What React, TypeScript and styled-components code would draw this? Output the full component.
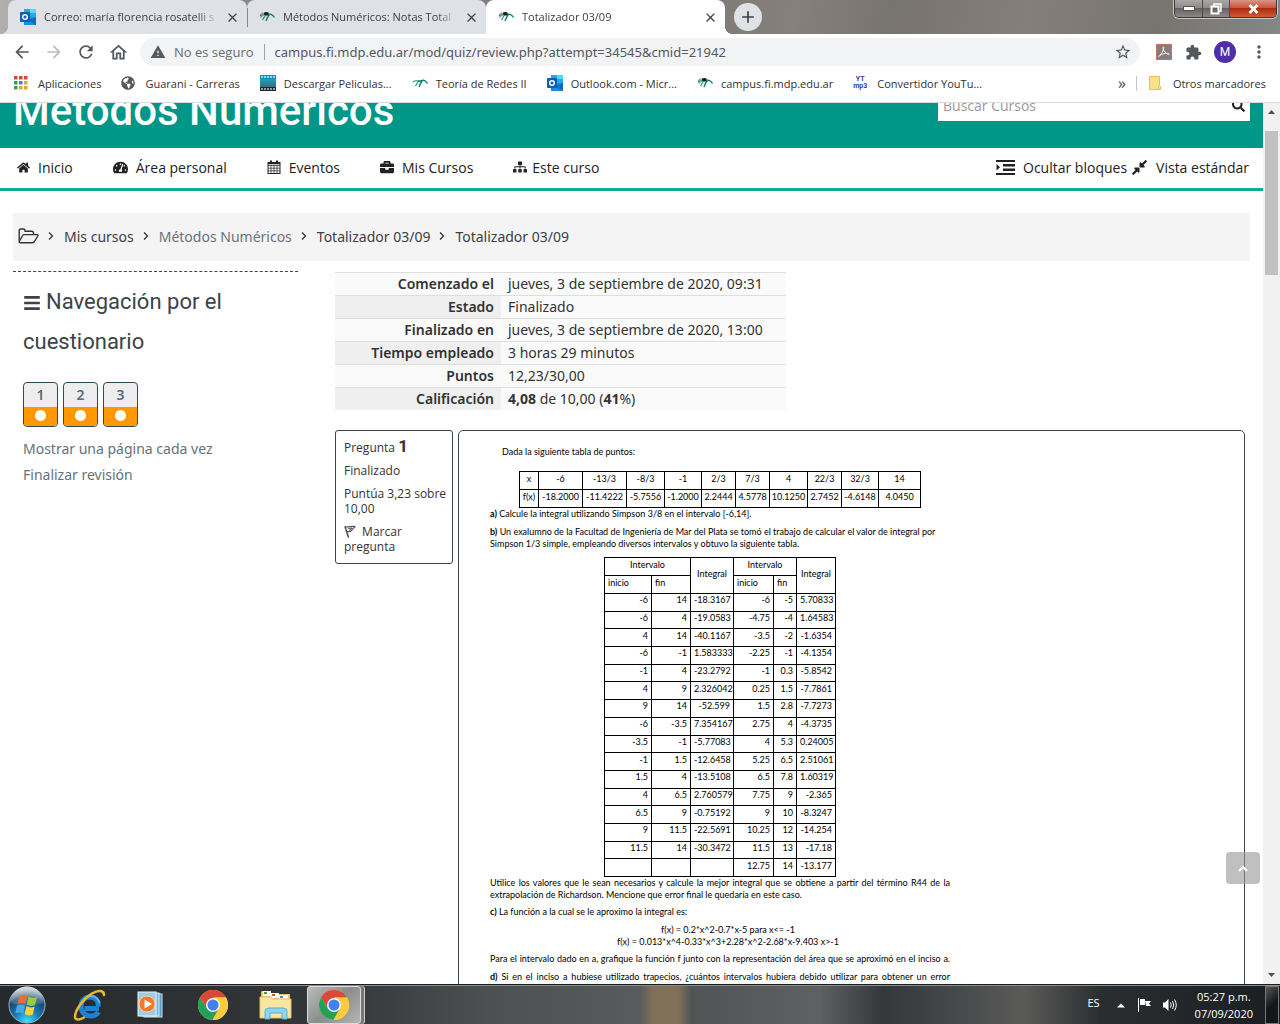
import React from "react";
import styled, { createGlobalStyle, css } from "styled-components";
import {
  MdArrowBack,
  MdArrowForward,
  MdRefresh,
  MdOutlineHome,
  MdWarning,
  MdStarBorder,
  MdExtension,
  MdMoreVert,
  MdClose,
  MdAdd,
} from "react-icons/md";
import {
  FaHome,
  FaTachometerAlt,
  FaBriefcase,
  FaSitemap,
  FaCompressAlt,
  FaSearch,
  FaBars,
  FaGlobeAmericas,
} from "react-icons/fa";

const UI = `"Open Sans", "Noto Sans", sans-serif`;
const BODY = `"Noto Sans", "Open Sans", sans-serif`;
const HEAD = `Roboto, "Open Sans", sans-serif`;
const DOC = `Lato, "Open Sans", sans-serif`;

const Global = createGlobalStyle`
  *, *::before, *::after { box-sizing: border-box; }
  html, body { margin: 0; padding: 0; }
  body { font-family: ${UI}; font-size: 14px; color: #333; background: #fff; overflow: hidden; }
  button { font: inherit; color: inherit; padding: 0; border: 0; background: none; }
  a { color: inherit; text-decoration: none; }
  svg { display: block; flex: none; }
  table { border-spacing: 0; border-collapse: collapse; }
`;

/* ---------- drawings ---------- */

const CampusIcon = ({ size = 16, body = true }: { size?: number; body?: boolean }) => (
  <svg width={size} height={size} viewBox="0 0 16 16" fill="none">
    {body && <path d="M1 6L4 3.500M1.500 8.500L4.500 5.500" stroke="#8d9a9a" strokeWidth="1.200" />}
    <path d="M1 7C3 5.500 4.500 5.500 6.500 6L3.500 11" stroke="#2a8f83" strokeWidth="1.200" />
    <path d="M6 6H10C8.500 8 8 9.500 7 12" stroke="#13806f" strokeWidth="1.400" />
    <path d="M9 6C11.500 4.500 14 5.500 15.500 8.500" stroke="#13806f" strokeWidth="1.400" />
    {body && <path d="M4.500 4C6 2.500 8.500 2.500 10 4L9 6H5.500Z" fill="#1b1d1d" />}
  </svg>
);

const OutlookIcon = () => (
  <svg width="16" height="16" viewBox="0 0 16 16">
    <rect x="4" y="0" width="12" height="8" fill="#28a8ea" />
    <rect x="10" y="0" width="6" height="4" fill="#50d9ff" />
    <rect x="4" y="4" width="6" height="5" fill="#0364b8" />
    <path d="M4 8h12v8H4z" fill="#1490df" />
    <path d="M16 8v8L8 11z" fill="#0f6cbd" />
    <rect x="0" y="3" width="10" height="10" rx="1" fill="#0a5fb4" />
    <circle cx="5" cy="8" r="2.300" fill="none" stroke="#fff" strokeWidth="1.500" />
  </svg>
);

const AppsIcon = () => (
  <svg width="14" height="14" viewBox="0 0 14 14">
    {["#d9453a", "#d9453a", "#d9453a", "#3f9c57", "#3f7de0", "#e3a52c", "#3f9c57", "#e3a52c", "#e3a52c"].map(
      (c, i) => (
        <rect key={i} x={(i % 3) * 5} y={Math.floor(i / 3) * 5} width="3.500" height="3.500" fill={c} />
      )
    )}
  </svg>
);

const FilmIcon = () => (
  <svg width="16" height="16" viewBox="0 0 16 16">
    <defs>
      <linearGradient id="film" x1="0" y1="0" x2="0" y2="1">
        <stop offset="0" stopColor="#1c9fbd" />
        <stop offset="1" stopColor="#3c6f80" />
      </linearGradient>
    </defs>
    <rect width="16" height="16" fill="#1f2a30" />
    <rect width="16" height="4" fill="#0d8fb8" />
    <rect y="4" width="16" height="8" fill="url(#film)" />
    {[1, 4, 7, 10, 13].map((x) => (
      <g key={x}>
        <rect x={x} y="1" width="2" height="2" fill="#7fe4f7" />
        <rect x={x} y="13" width="2" height="2" fill="#93a5ab" />
      </g>
    ))}
  </svg>
);

const FolderMark = () => (
  <svg width="12" height="14" viewBox="0 0 12 14">
    <path d="M0.500 0.500h10v9l1 1v3h-11z" fill="#fde08a" stroke="#e6c04f" />
    <path d="M9.500 13.500v-3.500" stroke="#e6c04f" />
  </svg>
);

const PdfIcon = () => (
  <svg width="16" height="16" viewBox="0 0 16 16" fill="none">
    <rect x="0.500" y="0.500" width="15" height="15" fill="#857c7c" stroke="#c4726c" />
    <path
      d="M3 12.500C5 11 7.500 6.500 7.800 3.500C7.800 2.500 6.800 2.500 6.900 3.800C7.200 6.500 10 10 12.800 10.600C14 10.600 13 9.300 11.500 9.300C9 9.300 6 10 3.500 11.500C2.500 12.200 2.500 13 3 12.500Z"
      stroke="#f3eded"
      strokeWidth="1"
    />
  </svg>
);

const CalendarIcon = () => (
  <svg width="14" height="14" viewBox="0 0 14 14" fill="none" stroke="#222">
    <rect x="1" y="2.500" width="12" height="11" />
    <path d="M1 3.500h12" strokeWidth="1.500" />
    <path d="M4 5v8.500M7 5v8.500M10 5v8.500M1 5.500h12M1 8.200h12M1 10.800h12" strokeWidth="0.700" />
    <path d="M4 0.500v3M10 0.500v3" strokeWidth="2" />
  </svg>
);

const IndentIcon = () => (
  <svg width="19" height="15" viewBox="0 0 19 15" fill="#222">
    <path d="M0 0h19v2H0zM7 4h12v2.500H7zM7 8.500h12v2.500H7zM0 13h19v2H0zM0.500 4L4 7.300L0.500 10.600z" />
  </svg>
);

const FolderOpenIcon = () => (
  <svg width="21" height="16" viewBox="0 0 21 16" fill="none" stroke="#333" strokeWidth="1.400" strokeLinejoin="round">
    <path d="M1.200 13V2.500Q1.200 1 2.700 1H5.500Q7 1 7 2.500V3.200H13.500Q15.500 3.200 15.500 5V6.500" />
    <path d="M5.800 6.600H19.200Q20.600 6.600 19.800 8L16.500 13.500Q15.600 14.800 14 14.800H2.500Q0.500 14.800 1.500 13L4.300 8Q5 6.600 5.800 6.600Z" />
  </svg>
);

const FlagIcon = () => (
  <svg width="12" height="13" viewBox="0 0 12 13" fill="none" stroke="#555" strokeWidth="1.200">
    <path d="M1 1.500L4.500 12.500" strokeWidth="1.600" />
    <path d="M1 1.500C4 3 7 0.500 11 1.500L6.500 6.500C5 6 4 6.500 3 7.500" />
    <path d="M4 3.500L8 3L5 5.500" strokeWidth="1" />
  </svg>
);

const ChromeLogo = () => (
  <svg width="30" height="30" viewBox="0 0 30 30">
    <circle cx="15" cy="15" r="15" fill="#fbc934" />
    <path d="M2 7.500A15 15 0 0 1 28 7.500H15L9 18.500Z" fill="#d9483b" />
    <path d="M2 7.500A15 15 0 0 0 14.500 30L21 18.500L9 18.500Z" fill="#23a05a" />
    <path d="M28 7.500A15 15 0 0 1 14.500 30L21 18.500L20 10L15 7.500Z" fill="#fccc3e" />
    <circle cx="15" cy="15" r="7" fill="#f4f4f4" />
    <circle cx="15" cy="15" r="5.500" fill="#4280ef" />
  </svg>
);

const StartOrb = () => (
  <svg width="40" height="38" viewBox="0 0 40 38">
    <defs>
      <radialGradient id="orb" cx="0.5" cy="0.95" r="0.9">
        <stop offset="0" stopColor="#3fe0ff" />
        <stop offset="0.4" stopColor="#1578b4" />
        <stop offset="0.75" stopColor="#17486e" />
        <stop offset="1" stopColor="#8fa9b8" />
      </radialGradient>
      <linearGradient id="gloss" x1="0" y1="0" x2="0" y2="1">
        <stop offset="0" stopColor="#fff" stopOpacity="0.600" />
        <stop offset="1" stopColor="#fff" stopOpacity="0.100" />
      </linearGradient>
    </defs>
    <circle cx="20" cy="19" r="18" fill="url(#orb)" stroke="#9fb6c2" strokeWidth="1" />
    <path d="M3.500 17A16.500 16.500 0 0 1 36.500 17Q20 22 3.500 17Z" fill="url(#gloss)" />
    <path d="M12.500 10Q16 8 20 10L18.300 18Q14.500 16 10.500 18Z" fill="#ef6b2f" />
    <path d="M21.500 10.500Q25.500 13 30 11L28 19Q24 21 19.800 18.500Z" fill="#9ccb3d" />
    <path d="M10 19.500Q14 17.500 18 19.500L16.200 27.500Q12.500 25.500 8 27.500Z" fill="#4aa5e8" />
    <path d="M19.500 20Q23.500 22.500 27.600 20.500L25.800 28.500Q21.500 30.500 17.700 28Z" fill="#fcd13a" />
  </svg>
);

const ExplorerE = () => (
  <svg width="34" height="32" viewBox="0 0 34 32" fill="none">
    <path
      d="M27 19.500H12.500M26.500 17.500C26.500 11.500 23 8 18 8C12.500 8 9 12 9 17.500C9 23 13 27 18.500 27C22.500 27 25 25.500 26.500 23"
      stroke="#1c82d2"
      strokeWidth="5"
    />
    <path d="M10 14C12 9 16 7 19 7C23 7 26.500 10 27.500 14" stroke="#5cb9f0" strokeWidth="2" />
    <path
      d="M32 6C32 1 26 1 20 4.500C11 10 3 21 3 28C3 32 9 30.500 12 28.500"
      stroke="#f0b52c"
      strokeWidth="2.500"
      strokeLinecap="round"
    />
  </svg>
);

const MediaIcon = () => (
  <svg width="27" height="27" viewBox="0 0 27 27">
    <rect x="7" y="3" width="18" height="23" fill="#5f9cc2" stroke="#bfe0f2" />
    <rect x="4" y="2" width="18" height="23" fill="#7db6d8" stroke="#d3ecf8" />
    <rect x="1" y="1" width="18" height="24" fill="#9fcbe4" stroke="#e3f3fb" />
    <circle cx="10" cy="13" r="8" fill="#f0792a" stroke="#fbd2ad" />
    <path d="M7.500 8.500L15 13L7.500 17.500Z" fill="#fff" />
  </svg>
);

const FolderIcon = () => (
  <svg width="33" height="31" viewBox="0 0 33 31">
    <path d="M2 5V3Q2 2 3 2H9L11 5H31V28H2Z" fill="#e7c667" />
    <rect x="4" y="2" width="8" height="5" fill="#fff" />
    <rect x="5" y="3" width="3" height="2" fill="#38a345" />
    <rect x="12" y="4" width="8" height="5" fill="#fff" />
    <rect x="13" y="5" width="3" height="2" fill="#d9483b" />
    <rect x="20" y="6" width="9" height="4" fill="#fff" />
    <rect x="21" y="7" width="3" height="2" fill="#3b8fd8" />
    <path d="M1 8H12L14 10H32V29H1Z" fill="#f8e6a3" stroke="#e0c36a" />
    <path d="M6 30V22Q6 19 10 19H24Q28 19 28 22V30H23V24H11V30Z" fill="#8fd3ef" stroke="#58aed2" />
  </svg>
);

const TrayFlag = () => (
  <svg width="15" height="15" viewBox="0 0 15 15" fill="#fff">
    <path d="M1 1h1v14H1zM3 2h5v6H3zM8 4h6l-2 2.500L14 9H9z" />
  </svg>
);

const TraySpeaker = () => (
  <svg width="16" height="14" viewBox="0 0 16 14" fill="#fff">
    <path d="M1 4.500H3L6.500 1V13L3 9.500H1Z" />
    <path d="M8.500 4.500Q10 7 8.500 9.500M10.500 3Q13 7 10.500 11M12.500 1.500Q16 7 12.500 12.500" fill="none" stroke="#fff" />
  </svg>
);

/* ---------- window ---------- */

const Screen = styled.div`
  height: 100vh;
  display: flex;
  flex-direction: column;
`;

const TabStrip = styled.div`
  height: 34px;
  flex: none;
  display: flex;
  align-items: flex-start;
  padding: 0 3px 0 8px;
  background: linear-gradient(100deg, #b2b0ae 0, #8f8d8a 12%, #7a7773 50%, #858079 62%, #77736e 70%, #857f79 80%, #77746f 90%, #858785 100%);
`;

const flare = css`
  content: "";
  position: absolute;
  bottom: 0;
  width: 8px;
  height: 8px;
`;

const Tab = styled.div<{ $active?: boolean }>`
  position: relative;
  flex: 0 1 239px;
  min-width: 0;
  height: 34px;
  display: flex;
  align-items: center;
  gap: 8px;
  padding: 0 9px 0 12px;
  border-radius: 8px 8px 0 0;
  background: ${(p) => (p.$active ? "#fff" : "#dee1e6")};
  &:first-child::before {
    ${flare}
    left: -8px;
    background: radial-gradient(circle at 0 0, transparent 8px, #dee1e6 8px);
  }
  &:nth-child(3)::after {
    ${flare}
    right: -8px;
    background: radial-gradient(circle at 100% 0, transparent 8px, #fff 8px);
  }
  & + &:nth-child(2)::before {
    content: "";
    position: absolute;
    left: 0;
    top: 8px;
    width: 1px;
    height: 19px;
    background: #85888c;
  }
`;

const TabTitle = styled.span`
  flex: 1;
  min-width: 0;
  overflow: hidden;
  white-space: nowrap;
  font-size: 11px;
  color: #3c4043;
  padding-bottom: 2px;
  mask-image: linear-gradient(90deg, #000 88%, transparent);
`;

const IconButton = styled.button<{ $size?: number; $tone?: string }>`
  width: ${(p) => p.$size ?? 16}px;
  height: ${(p) => p.$size ?? 16}px;
  flex: none;
  display: flex;
  align-items: center;
  justify-content: center;
  color: ${(p) => p.$tone ?? "#54575b"};
`;

const NewTab = styled(IconButton)`
  margin: 3px 0 0 9px;
  border-radius: 50%;
  background: #dee1e6;
`;

const WindowButtons = styled.div`
  margin-left: auto;
  display: flex;
  border: 1px solid #3a3a3a;
  border-top: 0;
  border-radius: 0 0 5px 5px;
  overflow: hidden;
  box-shadow: 0 0 0 1px #c9c6c3;
`;

const WindowButton = styled.button<{ $close?: boolean }>`
  width: ${(p) => (p.$close ? 47 : 27)}px;
  height: 17px;
  display: flex;
  align-items: center;
  justify-content: center;
  background: ${(p) =>
    p.$close
      ? "linear-gradient(#d99686, #c9553c 45%, #b02a10 50%, #cf5a34)"
      : "linear-gradient(#aaa8a6, #8f8e8c 45%, #646362 50%, #8a8988)"};
  & + & { border-left: 1px solid #4a4a4a; }
`;

const Toolbar = styled.div`
  flex: none;
  display: flex;
  align-items: center;
  padding: 4px 11px 0 12px;
  background: #fff;
`;

const NavButtons = styled.div`
  display: flex;
  gap: 12px;
  margin-right: 12px;
`;

const Omnibox = styled.div`
  flex: 1;
  min-width: 0;
  height: 28px;
  display: flex;
  align-items: center;
  padding: 0 8px 0 10px;
  border-radius: 14px;
  background: #f1f3f4;
  color: #6a6d71;
  font-size: 13px;
`;

const Security = styled.span`
  padding: 0 10px 0 8px;
  border-right: 1px solid #a0a3a6;
  line-height: 16px;
`;

const Address = styled.input`
  flex: 1;
  min-width: 0;
  margin-left: 10px;
  padding: 0;
  border: 0;
  background: none;
  outline: none;
  font: 13px ${BODY};
  color: #55585c;
`;

const Extensions = styled.div`
  display: flex;
  align-items: center;
  gap: 13px;
  margin-left: 16px;
`;

const Avatar = styled.button`
  width: 22px;
  height: 22px;
  border-radius: 50%;
  background: #512da8;
  color: #fff;
  font: 12px ${HEAD};
`;

const Bookmarks = styled.div`
  height: 37px;
  flex: none;
  display: flex;
  align-items: center;
  gap: 20px;
  padding: 0 14px 2px;
  background: #fff;
  border-bottom: 1px solid #d9dcdf;
  font-size: 11px;
  color: #303336;
`;

const Bookmark = styled.a`
  display: flex;
  align-items: center;
  gap: 8px;
  white-space: nowrap;
`;

const MarkIcon = styled.span`
  width: 16px;
  display: flex;
  justify-content: flex-start;
`;

const Mp3Mark = styled.span`
  color: #2d3f9b;
  font: bold 7px/7px ${HEAD};
  text-align: center;
`;

const BookmarksEnd = styled.div`
  margin-left: auto;
  display: flex;
  align-items: center;
  gap: 10px;
`;

const More = styled.button`
  font-size: 16px;
  color: #45484c;
`;

const Others = styled(Bookmark)`
  padding-left: 12px;
  border-left: 1px solid #c6c9cc;
`;

/* ---------- page ---------- */

const Viewport = styled.div`
  position: relative;
  flex: 1;
  min-height: 0;
  display: flex;
  overflow: hidden;
`;

const Page = styled.div`
  flex: 1;
  min-width: 0;
  overflow: hidden;
`;

const Header = styled.header`
  height: 45px;
  display: flex;
  align-items: flex-end;
  justify-content: space-between;
  padding: 0 13px;
  background: #009688;
  overflow: hidden;
`;

const SiteTitle = styled.h1`
  margin: 0 0 13px;
  font: 500 42px/48px ${HEAD};
  color: #fff;
`;

const Search = styled.form`
  width: 312px;
  height: 30px;
  display: flex;
  align-items: center;
  margin-bottom: 27px;
  padding: 0 5px 2px;
  background: #fff;
  color: #222;
`;

const SearchInput = styled.input`
  flex: 1;
  min-width: 0;
  padding: 0;
  border: 0;
  outline: none;
  font: 14px ${UI};
  &::placeholder { color: #999; }
`;

const MenuBar = styled.nav`
  height: 43px;
  display: flex;
  align-items: center;
  gap: 40px;
  padding: 0 14px 2px 17px;
  border-bottom: 3px solid #13a89a;
  color: #222;
`;

const MenuLink = styled.a<{ $gap?: number }>`
  display: flex;
  align-items: center;
  gap: ${(p) => p.$gap ?? 8}px;
  white-space: nowrap;
`;

const MenuRight = styled.div`
  margin-left: auto;
  display: flex;
  gap: 4px;
`;

const Crumbs = styled.nav`
  height: 48px;
  display: flex;
  align-items: center;
  gap: 9px;
  margin: 22px 13px 0;
  padding: 0 5px 2px;
  background: #f4f4f4;
  font-family: ${BODY};
`;

const Crumb = styled.a<{ $soft?: boolean }>`
  color: ${(p) => (p.$soft ? "#69727a" : "#3c4043")};
`;

const Chevron = () => (
  <svg width="7" height="10" viewBox="0 0 7 10" fill="none" stroke="#333" strokeWidth="1.300">
    <path d="M1 1.500L4.500 5L1 8.500" />
  </svg>
);

const Columns = styled.div`
  display: grid;
  grid-template-columns: 285px 1fr;
  gap: 37px;
  padding: 10px 18px 0 13px;
  font-family: ${BODY};
`;

const Sidebar = styled.aside`
  border-top: 1px dashed #444;
  padding: 10px;
`;

const SideTitle = styled.h2`
  margin: 0;
  font: 400 22px/40px ${HEAD};
  color: #3d434a;
  svg { display: inline; vertical-align: -3px; margin-right: 5px; }
`;

const QuizButtons = styled.div`
  display: flex;
  gap: 5px;
  margin: 20px 0 9px;
`;

const QuizButton = styled.a`
  width: 35px;
  height: 45px;
  display: flex;
  flex-direction: column;
  border: 1px solid #2d4d5c;
  border-radius: 4px;
  overflow: hidden;
  background: #ededed;
  color: #5c6a72;
  font-weight: 600;
  line-height: 24px;
  text-align: center;
  &::after {
    content: "";
    flex: 1;
    background: radial-gradient(circle at 50% 45%, #fff 5px, #ff9800 6px);
  }
`;

const SideLink = styled.a`
  display: block;
  line-height: 26px;
  color: #66717a;
`;

const Summary = styled.table`
  width: 451px;
  margin-top: 1px;
  line-height: 22px;
  th, td {
    padding: 0 7px;
    border-top: 1px solid #ddd;
    background: #fafafa;
    text-align: left;
  }
  th { width: 166px; text-align: right; font-weight: 600; }
  tr:nth-child(even) th { background: #efefef; }
`;

const Question = styled.section`
  display: flex;
  align-items: flex-start;
  gap: 5px;
  margin-top: 20px;
`;

const Info = styled.div`
  width: 118px;
  height: 134px;
  flex: none;
  display: flex;
  flex-direction: column;
  gap: 8px;
  padding: 8px 4px 8px 8px;
  border: 1px solid #3f464b;
  border-radius: 3px;
  font: 12px/15px ${UI};
  p, h3 { margin: 0; }
  h3 { font-size: 12px; font-weight: 400; }
  h3 b { font: 700 17px/15px ${HEAD}; }
  svg { display: inline; vertical-align: -2px; margin: 0 3px 0 0; }
`;

const Content = styled.div`
  flex: 1;
  min-width: 0;
  min-height: 640px;
  padding: 15px 31px;
  border: 1px solid #3f464b;
  border-radius: 5px;
`;

const Sheet = styled.article`
  max-width: 460px;
  color: #000;
  font: 9px/12px ${DOC};
`;

const Para = styled.p<{ $gap?: number; $align?: string; $last?: string; $indent?: number }>`
  margin: 0 0 ${(p) => p.$gap ?? 6}px;
  padding-left: ${(p) => p.$indent ?? 0}px;
  text-align: ${(p) => p.$align ?? "left"};
  text-align-last: ${(p) => p.$last ?? "auto"};
`;

const Points = styled.table`
  table-layout: fixed;
  width: 402px;
  margin-left: 29px;
  line-height: 11px;
  td, th {
    height: 18px;
    padding: 0 0 5px;
    border: 1px solid #000;
    font-weight: 400;
    text-align: center;
  }
`;

const Integrals = styled.table`
  table-layout: fixed;
  width: 232px;
  height: 320px;
  margin: 0 0 0 114px;
  line-height: 11px;
  td, th {
    padding: 0 3px 5px;
    border: 1px solid #000;
    font-weight: 400;
    text-align: right;
  }
  th { height: 18px; text-align: left; }
  th[colspan], th[rowspan] { padding: 0 0 5px; text-align: center; }
`;

const Col = styled.col<{ $w: number }>`
  width: ${(p) => p.$w}px;
`;

const ToTop = styled.button`
  position: absolute;
  right: 20px;
  bottom: 100px;
  width: 34px;
  height: 32px;
  display: flex;
  align-items: center;
  justify-content: center;
  border-radius: 4px;
  background: rgba(150, 150, 150, 0.6);
`;

const Scrollbar = styled.div`
  width: 17px;
  flex: none;
  display: flex;
  flex-direction: column;
  align-items: center;
  background: #f1f1f1;
`;

const Thumb = styled.div`
  width: 13px;
  flex: 0 0 144px;
  margin: 11px 0 auto;
  background: #c1c1c1;
`;

const Arrow = ({ up }: { up?: boolean }) => (
  <svg width="17" height="17" viewBox="0 0 17 17" fill="#505050">
    <path d={up ? "M5 11L8.500 7L12 11Z" : "M5 6L8.500 10L12 6Z"} />
  </svg>
);

/* ---------- taskbar ---------- */

const Taskbar = styled.footer`
  height: 40px;
  flex: none;
  display: flex;
  align-items: center;
  padding: 0 1px 0 7px;
  border-top: 1px solid #1a1c1d;
  box-shadow: inset 0 1px 0 #8a8d8e;
  color: #fff;
  font-size: 11px;
  background: linear-gradient(
    90deg, #26292b 0, #34383a 27%, #4c5051 38%, #585b5b 50%, #80705a 51%, #80705a 53%, #505455 54%, #5d6162 64%,
    #34383b 69%, #474a4b 75%, #5b5a59 80%, #2b2e30 86%, #1b1e20 100%
  );
`;

const TaskButton = styled.button<{ $active?: boolean; $w: number }>`
  width: ${(p) => p.$w}px;
  height: 38px;
  display: flex;
  align-items: center;
  justify-content: center;
  ${(p) =>
    p.$active &&
    css`
      margin-left: 14px;
      border: 1px solid #dcdcdc;
      border-radius: 3px;
      background: linear-gradient(135deg, #bcbcbc, #8b8c8c 50%, #b4b4b4);
      box-shadow: 3px 0 0 #777, 4px 0 0 #ccc;
    `}
`;

const Tray = styled.div`
  margin-left: auto;
  display: flex;
  align-items: center;
  gap: 10px;
`;

const Language = styled.span`
  padding-bottom: 4px;
`;

const Clock = styled.time`
  margin: 0 2px 0 7px;
  text-align: center;
  line-height: 17px;
`;

const ShowDesktop = styled.button`
  width: 14px;
  height: 38px;
  border: 1px solid #777;
  background: linear-gradient(135deg, #55585a, #141617 50%);
`;

/* ---------- data ---------- */

const xs = ["-6", "-13/3", "-8/3", "-1", "2/3", "7/3", "4", "22/3", "32/3", "14"];
const fx = ["-18.2000", "-11.4222", "-5.7556", "-1.2000", "2.2444", "4.5778", "10.1250", "2.7452", "-4.6148", "4.0450"];

const integrals = [
  ["-6", "14", "-18.3167", "-6", "-5", "5.70833"],
  ["-6", "4", "-19.0583", "-4.75", "-4", "1.64583"],
  ["4", "14", "-40.1167", "-3.5", "-2", "-1.6354"],
  ["-6", "-1", "1.583333", "-2.25", "-1", "-4.1354"],
  ["-1", "4", "-23.2792", "-1", "0.3", "-5.8542"],
  ["4", "9", "2.326042", "0.25", "1.5", "-7.7861"],
  ["9", "14", "-52.599", "1.5", "2.8", "-7.7273"],
  ["-6", "-3.5", "7.354167", "2.75", "4", "-4.3735"],
  ["-3.5", "-1", "-5.77083", "4", "5.3", "0.24005"],
  ["-1", "1.5", "-12.6458", "5.25", "6.5", "2.51061"],
  ["1.5", "4", "-13.5108", "6.5", "7.8", "1.60319"],
  ["4", "6.5", "2.760579", "7.75", "9", "-2.365"],
  ["6.5", "9", "-0.75192", "9", "10", "-8.3247"],
  ["9", "11.5", "-22.5691", "10.25", "12", "-14.254"],
  ["11.5", "14", "-30.3472", "11.5", "13", "-17.18"],
  ["", "", "", "12.75", "14", "-13.177"],
];

const summary: [string, React.ReactNode][] = [
  ["Comenzado el", "jueves, 3 de septiembre de 2020, 09:31"],
  ["Estado", "Finalizado"],
  ["Finalizado en", "jueves, 3 de septiembre de 2020, 13:00"],
  ["Tiempo empleado", "3 horas 29 minutos"],
  ["Puntos", "12,23/30,00"],
  ["Calificación", <><b>4,08</b> de 10,00 (<b>41</b>%)</>],
];

const tabs = [
  { icon: <OutlookIcon />, title: "Correo: maría florencia rosatelli s" },
  { icon: <CampusIcon />, title: "Métodos Numéricos: Notas Total" },
  { icon: <CampusIcon />, title: "Totalizador 03/09", active: true },
];

const bookmarks = [
  { icon: <AppsIcon />, label: "Aplicaciones" },
  { icon: <FaGlobeAmericas size={14} color="#55585c" />, label: "Guarani - Carreras" },
  { icon: <FilmIcon />, label: "Descargar Peliculas..." },
  { icon: <CampusIcon body={false} />, label: "Teoría de Redes II" },
  { icon: <OutlookIcon />, label: "Outlook.com - Micr..." },
  { icon: <CampusIcon />, label: "campus.fi.mdp.edu.ar" },
  { icon: <Mp3Mark>YT<br />mp3</Mp3Mark>, label: "Convertidor YouTu..." },
];

const menu = [
  { icon: <FaHome size={13} />, label: "Inicio" },
  { icon: <FaTachometerAlt size={15} />, label: "Área personal" },
  { icon: <CalendarIcon />, label: "Eventos" },
  { icon: <FaBriefcase size={14} />, label: "Mis Cursos" },
  { icon: <FaSitemap size={14} />, label: "Este curso", gap: 5 },
];

const crumbs = ["Mis cursos", "Métodos Numéricos", "Totalizador 03/09", "Totalizador 03/09"];

export default function App() {
  return (
    <Screen>
      <Global />
      <TabStrip>
        {tabs.map((t) => (
          <Tab key={t.title} $active={t.active}>
            {t.icon}
            <TabTitle>{t.title}</TabTitle>
            <IconButton $size={12} $tone="#3c4043" aria-label="Cerrar pestaña"><MdClose size={15} /></IconButton>
          </Tab>
        ))}
        <NewTab $size={28} $tone="#3c4043" aria-label="Nueva pestaña"><MdAdd size={20} /></NewTab>
        <WindowButtons>
          <WindowButton aria-label="Minimizar">
            <svg width="12" height="5"><rect x="0.500" y="0.500" width="11" height="4" fill="#fff" stroke="#555" /></svg>
          </WindowButton>
          <WindowButton aria-label="Restaurar">
            <svg width="12" height="12" fill="none" stroke="#fff" strokeWidth="1.500">
              <path d="M4 3V1H11V8H9" /><rect x="1.500" y="3.500" width="7" height="7" strokeWidth="2" />
            </svg>
          </WindowButton>
          <WindowButton $close aria-label="Cerrar">
            <svg width="11" height="10" stroke="#fff" strokeWidth="2.800"><path d="M1.500 1L9.500 9M9.500 1L1.500 9" /></svg>
          </WindowButton>
        </WindowButtons>
      </TabStrip>

      <Toolbar>
        <NavButtons>
          <IconButton $size={20} aria-label="Atrás"><MdArrowBack size={20} /></IconButton>
          <IconButton $size={20} $tone="#b9bbbe" aria-label="Adelante"><MdArrowForward size={20} /></IconButton>
          <IconButton $size={20} aria-label="Recargar"><MdRefresh size={20} /></IconButton>
          <IconButton $size={20} aria-label="Inicio"><MdOutlineHome size={21} /></IconButton>
        </NavButtons>
        <Omnibox>
          <MdWarning size={16} color="#55585c" />
          <Security>No es seguro</Security>
          <Address
            aria-label="Dirección"
            defaultValue="campus.fi.mdp.edu.ar/mod/quiz/review.php?attempt=34545&cmid=21942"
          />
          <IconButton $size={18} aria-label="Favorito"><MdStarBorder size={18} /></IconButton>
        </Omnibox>
        <Extensions>
          <IconButton aria-label="PDF"><PdfIcon /></IconButton>
          <IconButton aria-label="Extensiones"><MdExtension size={17} /></IconButton>
          <Avatar>M</Avatar>
          <IconButton $size={20} aria-label="Menú"><MdMoreVert size={20} /></IconButton>
        </Extensions>
      </Toolbar>

      <Bookmarks>
        {bookmarks.map((b) => (
          <Bookmark key={b.label} href="#">
            <MarkIcon>{b.icon}</MarkIcon>
            {b.label}
          </Bookmark>
        ))}
        <BookmarksEnd>
          <More>»</More>
          <Others href="#"><MarkIcon><FolderMark /></MarkIcon>Otros marcadores</Others>
        </BookmarksEnd>
      </Bookmarks>

      <Viewport>
        <Page>
          <Header>
            <SiteTitle>Métodos Numéricos</SiteTitle>
            <Search>
              <SearchInput aria-label="Buscar Cursos" placeholder="Buscar Cursos" />
              <IconButton $size={13} $tone="#222" aria-label="Buscar"><FaSearch size={13} /></IconButton>
            </Search>
          </Header>
          <MenuBar>
            {menu.map((m) => (
              <MenuLink key={m.label} href="#" $gap={m.gap}>{m.icon}{m.label}</MenuLink>
            ))}
            <MenuRight>
              <MenuLink href="#"><IndentIcon />Ocultar bloques</MenuLink>
              <MenuLink href="#"><FaCompressAlt size={17} />Vista estándar</MenuLink>
            </MenuRight>
          </MenuBar>
          <Crumbs>
            <FolderOpenIcon />
            {crumbs.map((c, i) => (
              <React.Fragment key={i}>
                <Chevron />
                <Crumb href="#" $soft={i === 1}>{c}</Crumb>
              </React.Fragment>
            ))}
          </Crumbs>
          <Columns>
            <Sidebar>
              <SideTitle><FaBars size={18} />Navegación por el cuestionario</SideTitle>
              <QuizButtons>
                {[1, 2, 3].map((n) => <QuizButton key={n} href="#">{n}</QuizButton>)}
              </QuizButtons>
              <SideLink href="#">Mostrar una página cada vez</SideLink>
              <SideLink href="#">Finalizar revisión</SideLink>
            </Sidebar>
            <main>
              <Summary>
                <tbody>
                  {summary.map(([k, v]) => (
                    <tr key={k}><th scope="row">{k}</th><td>{v}</td></tr>
                  ))}
                </tbody>
              </Summary>
              <Question>
                <Info>
                  <h3>Pregunta <b>1</b></h3>
                  <p>Finalizado</p>
                  <p>Puntúa 3,23 sobre 10,00</p>
                  <p><a href="#"><FlagIcon /> Marcar pregunta</a></p>
                </Info>
                <Content>
                  <Sheet>
                    <Para $gap={13} $indent={12}>Dada la siguiente tabla de puntos:</Para>
                    <Points>
                      <colgroup>
                        {[19, 44, 44, 38, 37, 34, 34, 38, 34, 37, 42].map((w, i) => <Col key={i} $w={w} />)}
                      </colgroup>
                      <tbody>
                        <tr><th scope="row">x</th>{xs.map((v) => <td key={v}>{v}</td>)}</tr>
                        <tr><th scope="row">f(x)</th>{fx.map((v) => <td key={v}>{v}</td>)}</tr>
                      </tbody>
                    </Points>
                    <Para><b>a)</b> Calcule la integral utilizando Simpson 3/8 en el intervalo [-6,14].</Para>
                    <Para $gap={7}>
                      <b>b)</b> Un exalumno de la Facultad de Ingeniería de Mar del Plata se tomó el trabajo de calcular el
                      valor de integral por Simpson 1/3 simple, empleando diversos intervalos y obtuvo la siguiente tabla.
                    </Para>
                    <Integrals>
                      <colgroup>
                        {[47, 39, 43, 40, 23, 39].map((w, i) => <Col key={i} $w={w} />)}
                      </colgroup>
                      <thead>
                        <tr>
                          <th colSpan={2}>Intervalo</th>
                          <th rowSpan={2}>Integral</th>
                          <th colSpan={2}>Intervalo</th>
                          <th rowSpan={2}>Integral</th>
                        </tr>
                        <tr><th>inicio</th><th>fin</th><th>inicio</th><th>fin</th></tr>
                      </thead>
                      <tbody>
                        {integrals.map((r, i) => <tr key={i}>{r.map((v, j) => <td key={j}>{v}</td>)}</tr>)}
                      </tbody>
                    </Integrals>
                    <Para $gap={5} $align="justify">
                      Utilice los valores que le sean necesarios y calcule la mejor integral que se obtiene a partir del
                      término R44 de la extrapolación de Richardson. Mencione que error final le quedaría en este caso.
                    </Para>
                    <Para><b>c)</b> La función a la cual se le aproximo la integral es:</Para>
                    <Para $gap={5} $align="center" $indent={16}>
                      f(x) = 0.2*x^2-0.7*x-5 para x&lt;= -1<br />
                      f(x) = 0.013*x^4-0.33*x^3+2.28*x^2-2.68*x-9.403 x&gt;-1
                    </Para>
                    <Para $last="justify">
                      Para el intervalo dado en a, grafique la función f junto con la representación del área que se
                      aproximó en el inciso a.
                    </Para>
                    <Para $last="justify">
                      <b>d)</b> Si en el inciso a hubiese utilizado trapecios, ¿cuántos intervalos hubiera debido utilizar
                      para obtener un error
                    </Para>
                  </Sheet>
                </Content>
              </Question>
            </main>
          </Columns>
        </Page>
        <ToTop aria-label="Subir">
          <svg width="10" height="7" fill="none" stroke="#fff" strokeWidth="2"><path d="M1 6L5 2L9 6" /></svg>
        </ToTop>
        <Scrollbar><Arrow up /><Thumb /><Arrow /></Scrollbar>
      </Viewport>

      <Taskbar>
        <TaskButton $w={40} aria-label="Inicio"><StartOrb /></TaskButton>
        <TaskButton $w={84} aria-label="Internet Explorer"><ExplorerE /></TaskButton>
        <TaskButton $w={38} aria-label="Reproductor"><MediaIcon /></TaskButton>
        <TaskButton $w={88} aria-label="Chrome"><ChromeLogo /></TaskButton>
        <TaskButton $w={36} aria-label="Explorador"><FolderIcon /></TaskButton>
        <TaskButton $w={54} $active aria-label="Chrome abierto"><ChromeLogo /></TaskButton>
        <Tray>
          <Language>ES</Language>
          <svg width="17" height="6" fill="#fff"><path d="M7 5.500L11 1.500L15 5.500Z" /></svg>
          <TrayFlag />
          <TraySpeaker />
          <Clock>05:27 p.m.<br />07/09/2020</Clock>
          <ShowDesktop aria-label="Mostrar escritorio" />
        </Tray>
      </Taskbar>
    </Screen>
  );
}
